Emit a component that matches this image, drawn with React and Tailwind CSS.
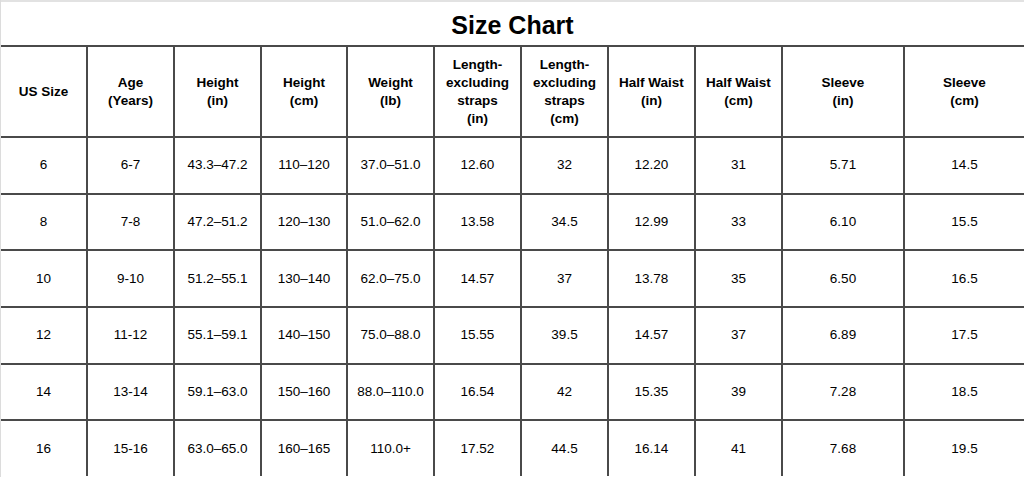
const headers = [
  ['US Size'],
  ['Age', '(Years)'],
  ['Height', '(in)'],
  ['Height', '(cm)'],
  ['Weight', '(lb)'],
  ['Length-', 'excluding', 'straps', '(in)'],
  ['Length-', 'excluding', 'straps', '(cm)'],
  ['Half Waist', '(in)'],
  ['Half Waist', '(cm)'],
  ['Sleeve', '(in)'],
  ['Sleeve', '(cm)'],
]

const rows = [
  ['6', '6-7', '43.3–47.2', '110–120', '37.0–51.0', '12.60', '32', '12.20', '31', '5.71', '14.5'],
  ['8', '7-8', '47.2–51.2', '120–130', '51.0–62.0', '13.58', '34.5', '12.99', '33', '6.10', '15.5'],
  ['10', '9-10', '51.2–55.1', '130–140', '62.0–75.0', '14.57', '37', '13.78', '35', '6.50', '16.5'],
  ['12', '11-12', '55.1–59.1', '140–150', '75.0–88.0', '15.55', '39.5', '14.57', '37', '6.89', '17.5'],
  ['14', '13-14', '59.1–63.0', '150–160', '88.0–110.0', '16.54', '42', '15.35', '39', '7.28', '18.5'],
  ['16', '15-16', '63.0–65.0', '160–165', '110.0+', '17.52', '44.5', '16.14', '41', '7.68', '19.5'],
]

function Cell({ col, children, className = '' }) {
  return (
    <div
      className={
        'flex flex-col items-center justify-center text-center border-t-2 border-[#4a4a4a] ' +
        (col > 0 ? 'border-l-2 ' : '') +
        className
      }
    >
      {children}
    </div>
  )
}

export default function App() {
  return (
    <div className="w-[1024px] h-[477px] overflow-hidden bg-white text-black font-['Liberation_Sans',Arial,sans-serif] border-l border-[#dcdcdc]">
      <div className="h-[2px] bg-[#e2e2e2]" />
      <div className="h-[43px] flex items-center justify-center text-[25px] font-bold leading-none pt-[3px]">
        Size Chart
      </div>

      {/* Table */}
      <div className="grid grid-cols-[85px_87px_87px_86px_87px_87px_87px_87px_87px_122px_121px] grid-rows-[91px_repeat(6,56.667px)]">
        {headers.map((lines, i) => (
          <Cell key={'h' + i} col={i} className="font-bold text-[13.5px] leading-[18px]">
            {lines.map((l) => (
              <span key={l}>{l}</span>
            ))}
          </Cell>
        ))}
        {rows.map((row, r) =>
          row.map((v, i) => (
            <Cell key={r + '-' + i} col={i} className="text-[13.5px] leading-[18px]">
              {v}
            </Cell>
          ))
        )}
      </div>
    </div>
  )
}
